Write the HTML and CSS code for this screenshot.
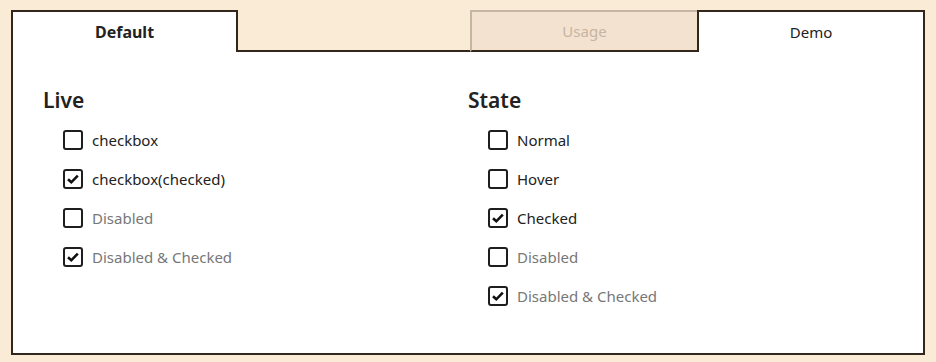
FILE: index.html
```html
<!DOCTYPE html>
<html lang="en">
<head>
    <meta charset="UTF-8">
    <meta name="viewport" content="width=device-width, initial-scale=1.0">
    <title>Checkbox</title>
    <link rel="stylesheet" href="styles.css">
</head>
<body>
    <div class="panel">
        <div class="tabs">
            <div class="tab tab-active">Default</div>
            <div class="tab tab-spacer"></div>
            <div class="tab tab-disabled">Usage</div>
            <div class="tab tab-demo">Demo</div>
        </div>

        <div class="content">
            <div class="column">
                <h2>Live</h2>
                <ul class="check-list">
                    <li class="check-item">
                        <span class="box"></span>
                        <span>checkbox</span>
                    </li>
                    <li class="check-item">
                        <span class="box checked"><svg viewBox="0 0 16 16"><path d="M3 8.2 L6.3 11.3 L12.8 4.6"/></svg></span>
                        <span>checkbox(checked)</span>
                    </li>
                    <li class="check-item disabled">
                        <span class="box"></span>
                        <span>Disabled</span>
                    </li>
                    <li class="check-item disabled">
                        <span class="box checked"><svg viewBox="0 0 16 16"><path d="M3 8.2 L6.3 11.3 L12.8 4.6"/></svg></span>
                        <span>Disabled &amp; Checked</span>
                    </li>
                </ul>
            </div>

            <div class="column">
                <h2>State</h2>
                <ul class="check-list">
                    <li class="check-item">
                        <span class="box"></span>
                        <span>Normal</span>
                    </li>
                    <li class="check-item">
                        <span class="box"></span>
                        <span>Hover</span>
                    </li>
                    <li class="check-item">
                        <span class="box checked"><svg viewBox="0 0 16 16"><path d="M3 8.2 L6.3 11.3 L12.8 4.6"/></svg></span>
                        <span>Checked</span>
                    </li>
                    <li class="check-item disabled">
                        <span class="box"></span>
                        <span>Disabled</span>
                    </li>
                    <li class="check-item disabled">
                        <span class="box checked"><svg viewBox="0 0 16 16"><path d="M3 8.2 L6.3 11.3 L12.8 4.6"/></svg></span>
                        <span>Disabled &amp; Checked</span>
                    </li>
                </ul>
            </div>
        </div>
    </div>
</body>
</html>
```

FILE: styles.css
```css
body {
    font-family: "Noto Sans", "Open Sans", sans-serif;
    margin: 0;
    padding: 10px 11px 7px;
    background-color: #faebd7;
    color: #222;
}

.panel {
    border: 2px solid #33261a;
    border-top: none;
    background: #ffffff;
}

/* tab row */
.tabs {
    display: grid;
    grid-template-columns: 225px 1fr 227px 226px;
    height: 42px;
}

.tab {
    display: flex;
    align-items: center;
    justify-content: center;
    font-size: 15px;
}

.tab-active {
    border-top: 2px solid #33261a;
    border-right: 2px solid #33261a;
    font-weight: bold;
    font-size: 16px;
}

.tab-spacer {
    background: #faebd7;
    border-bottom: 2px solid #33261a;
}

.tab-disabled {
    background: #f3e2cf;
    color: #c6b5a2;
    border-top: 2px solid #c6b5a2;
    border-left: 2px solid #c6b5a2;
    border-bottom: 2px solid #33261a;
}

.tab-demo {
    border-top: 2px solid #33261a;
    border-left: 2px solid #33261a;
}

/* columns */
.content {
    display: grid;
    grid-template-columns: 1fr 1fr;
    padding: 34px 30px 47px;
}

.column h2 {
    margin: 0 0 16px;
    font-size: 21px;
    font-weight: 600;
    line-height: 28px;
}

.check-list {
    list-style: none;
    margin: 0;
    padding: 0 0 0 20px;
    display: flex;
    flex-direction: column;
    gap: 19px;
}

.check-item {
    display: flex;
    align-items: center;
    gap: 9px;
    height: 20px;
    font-size: 15px;
}

.check-item.disabled {
    color: #777;
}

.box {
    box-sizing: border-box;
    width: 20px;
    height: 20px;
    border: 2px solid #1e1e1e;
    border-radius: 3px;
    display: flex;
    align-items: center;
    justify-content: center;
}

.box svg {
    width: 16px;
    height: 16px;
    fill: none;
    stroke: #111;
    stroke-width: 2.6;
}
```
